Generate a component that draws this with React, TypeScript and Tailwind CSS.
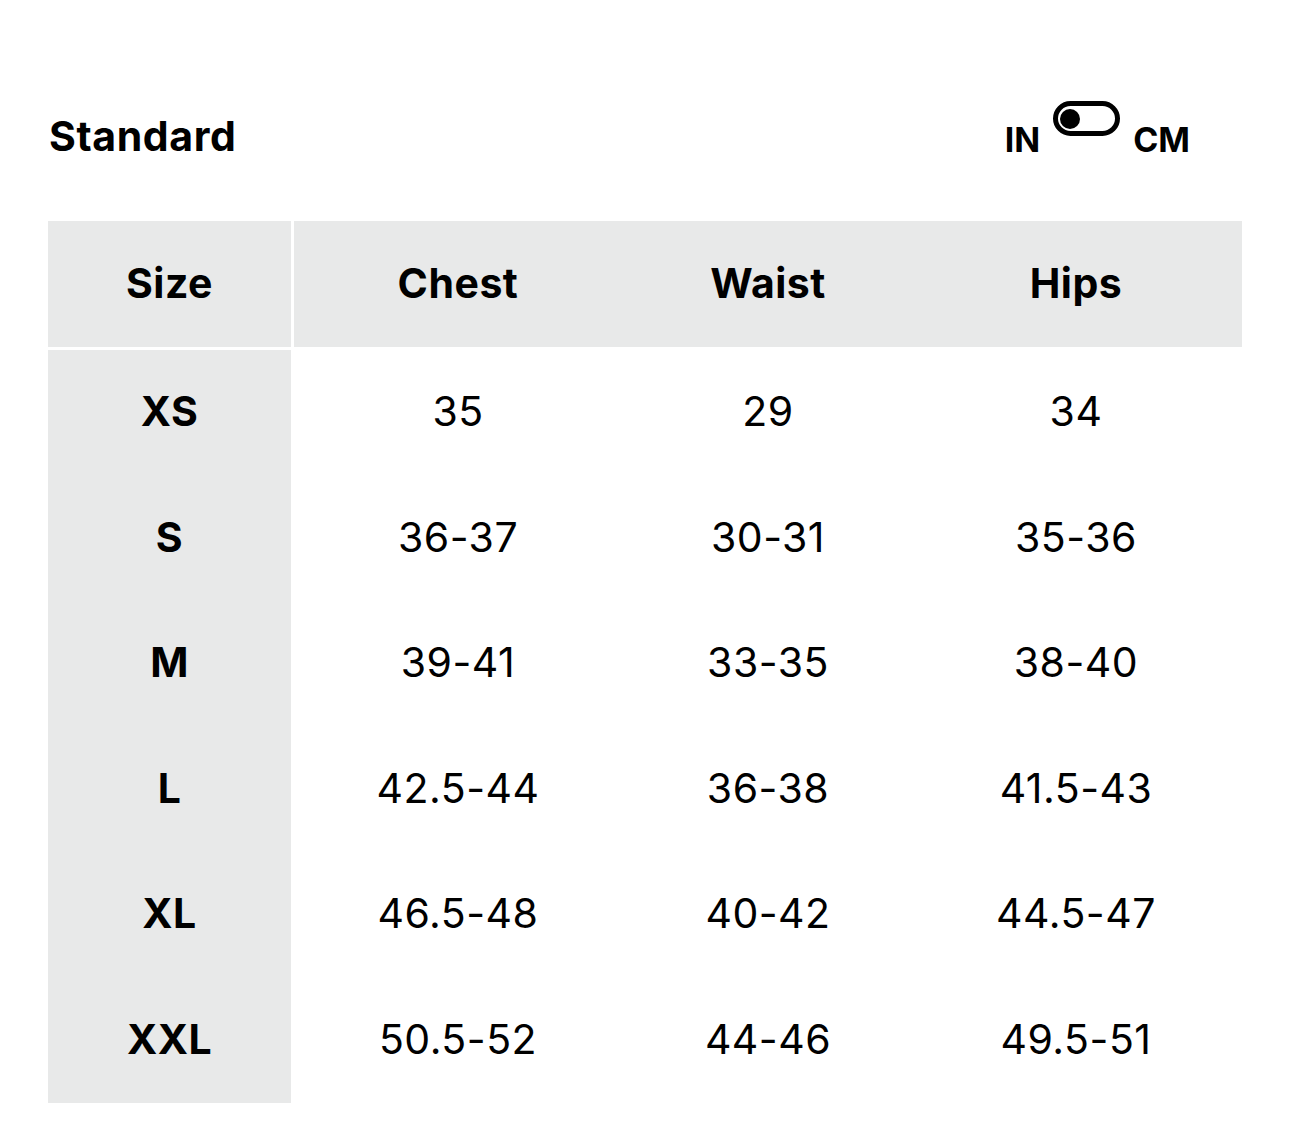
const rows = [
  { size: "XS", chest: "35", waist: "29", hips: "34" },
  { size: "S", chest: "36-37", waist: "30-31", hips: "35-36" },
  { size: "M", chest: "39-41", waist: "33-35", hips: "38-40" },
  { size: "L", chest: "42.5-44", waist: "36-38", hips: "41.5-43" },
  { size: "XL", chest: "46.5-48", waist: "40-42", hips: "44.5-47" },
  { size: "XXL", chest: "50.5-52", waist: "44-46", hips: "49.5-51" },
];

export default function App() {
  return (
    <div
      className="w-[1290px] h-[1127px] bg-white text-black px-[48px] pt-[100px]"
      style={{ fontFamily: "Inter, 'Liberation Sans', sans-serif" }}
    >
      {/* Title + unit toggle */}
      <div className="flex items-end justify-between h-[60px] pr-[52px]">
        <h2 className="text-[41px] font-bold leading-none tracking-[0.6px] pb-[3px] pl-[1px]">Standard</h2>
        <div className="flex items-end gap-[13px]">
          <span className="text-[34px] font-bold leading-none pb-[3px]">IN</span>
          <div className="mb-[24px] w-[67px] h-[35px] rounded-full border-[5px] border-black flex items-center pl-[2px]">
            <div className="w-[20px] h-[20px] rounded-full bg-black" />
          </div>
          <span className="text-[34px] font-bold leading-none pb-[3px]">CM</span>
        </div>
      </div>

      {/* Table */}
      <div className="mt-[61px] w-[1194px]">
        <div className="flex h-[126px] text-[41px] font-bold tracking-[0.5px]">
          <div className="w-[243px] bg-[#e8e9e9] flex items-center justify-center">Size</div>
          <div className="flex-1 ml-[3px] bg-[#e8e9e9] grid grid-cols-[328px_286px_324px] gap-x-[3px]">
            <div className="flex items-center justify-center">Chest</div>
            <div className="flex items-center justify-center">Waist</div>
            <div className="flex items-center justify-center">Hips</div>
          </div>
        </div>
        <div className="mt-[3px]">
          {rows.map((r) => (
            <div
              key={r.size}
              className="grid grid-cols-[243px_328px_286px_324px] gap-x-[3px] h-[125.5px] text-[41px] tracking-[0.5px] pb-[2px]"
            >
              <div className="bg-[#e8e9e9] -mb-[2px] pb-[2px] flex items-center justify-center font-bold">{r.size}</div>
              <div className="flex items-center justify-center">{r.chest}</div>
              <div className="flex items-center justify-center">{r.waist}</div>
              <div className="flex items-center justify-center">{r.hips}</div>
            </div>
          ))}
        </div>
      </div>
    </div>
  );
}
